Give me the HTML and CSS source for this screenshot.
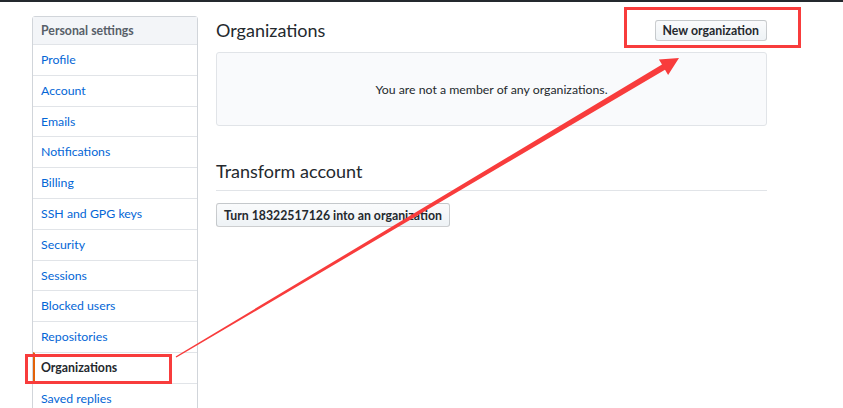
FILE: index.html
```html
<!DOCTYPE html>
<html lang="en">
<head>
  <meta charset="UTF-8">
  <meta name="viewport" content="width=device-width, initial-scale=1.0">
  <title>Organizations</title>
  <link rel="stylesheet" href="styles.css">
</head>
<body>
  <div class="page">
    <nav class="menu">
      <div class="menu-heading">Personal settings</div>
      <a class="menu-item" href="#">Profile</a>
      <a class="menu-item" href="#">Account</a>
      <a class="menu-item" href="#">Emails</a>
      <a class="menu-item" href="#">Notifications</a>
      <a class="menu-item" href="#">Billing</a>
      <a class="menu-item" href="#">SSH and GPG keys</a>
      <a class="menu-item" href="#">Security</a>
      <a class="menu-item" href="#">Sessions</a>
      <a class="menu-item" href="#">Blocked users</a>
      <a class="menu-item" href="#">Repositories</a>
      <a class="menu-item selected" href="#">Organizations</a>
      <a class="menu-item" href="#">Saved replies</a>
    </nav>

    <div class="main">
      <div class="subhead">
        <h2 class="subhead-heading">Organizations</h2>
        <button class="btn btn-sm">New organization</button>
      </div>
      <div class="blankslate">
        <p>You are not a member of any organizations.</p>
      </div>

      <div class="subhead subhead-spacious">
        <h2 class="subhead-heading">Transform account</h2>
      </div>
      <button class="btn">Turn 18322517126 into an organization</button>
    </div>
  </div>

  <!-- screenshot annotations -->
  <svg class="annotations" width="843" height="408" viewBox="0 0 843 408">
    <rect x="625.5" y="8.5" width="174" height="38" />
    <rect x="26.5" y="355.5" width="144" height="27" />
    <polygon class="arrow" points="175.6,356.4 662,64.6 658.9,59.5 679,58 668.1,74.9 665,69.8 176.4,357.6" />
  </svg>
</body>
</html>
```

FILE: styles.css
```css
:root {
  --text-color: #24292e;
  --link-color: #0366d6;
  --border-color: #e1e4e8;
  --menu-border: #d1d5da;
  --annotation-red: #f83c3c;
}

body {
  margin: 0;
  font-family: Lato, "Liberation Sans", sans-serif;
  font-size: 12.3px;
  color: var(--text-color);
  background: #fff;
  border-top: 2px solid #24292e;
  height: 406px;
  overflow: hidden;
}

.page {
  display: flex;
  gap: 18px;
  padding: 14px 0 0 32px;
}

/* Sidebar menu */
.menu {
  width: 166px;
  box-sizing: border-box;
  border: 1px solid var(--menu-border);
  border-radius: 3px;
  flex-shrink: 0;
}

.menu-heading {
  height: 27px;
  line-height: 27px;
  padding: 0 8px;
  font-weight: 700;
  color: #586069;
  background-color: #f3f5f8;
  border-bottom: 1px solid var(--border-color);
}

.menu-item {
  display: block;
  box-sizing: border-box;
  height: 30.8px;
  line-height: 30px;
  padding: 0 8px;
  color: var(--link-color);
  text-decoration: none;
  border-top: 1px solid var(--border-color);
}

.menu-heading + .menu-item {
  border-top: none;
  height: 29.8px;
}

.menu-item.selected {
  font-weight: 700;
  color: var(--text-color);
  padding-left: 6px;
  border-left: 2px solid #e36209;
}

/* Main content */
.main {
  width: 551px;
}

.subhead {
  display: flex;
  justify-content: space-between;
  align-items: center;
  height: 28px;
  margin-bottom: 8px;
}

.subhead-heading {
  margin: 0;
  font-size: 18px;
  font-weight: 400;
}

.subhead-spacious {
  margin-top: 28px;
  height: 34px;
  padding-bottom: 2px;
  border-bottom: 1px solid var(--border-color);
  margin-bottom: 12px;
}

.blankslate {
  height: 74px;
  box-sizing: border-box;
  display: flex;
  align-items: center;
  justify-content: center;
  background-color: #f9fafc;
  border: 1px solid var(--border-color);
  border-radius: 3px;
}

.blankslate p {
  margin: 0;
}

.btn {
  font-family: inherit;
  font-size: 12.3px;
  font-weight: 700;
  color: var(--text-color);
  height: 24px;
  padding: 0 7px;
  background-image: linear-gradient(-180deg, #fafbfc 0%, #eff3f6 90%);
  border: 1px solid rgba(27,31,35,0.2);
  border-radius: 3px;
  cursor: pointer;
}

.btn-sm {
  height: 21px;
  padding: 0 7px;
}

/* Annotations drawn over the screenshot */
.annotations {
  position: absolute;
  left: 0;
  top: 0;
  pointer-events: none;
}

.annotations rect {
  fill: none;
  stroke: var(--annotation-red);
  stroke-width: 3;
}

.annotations .arrow {
  fill: var(--annotation-red);
}
```
